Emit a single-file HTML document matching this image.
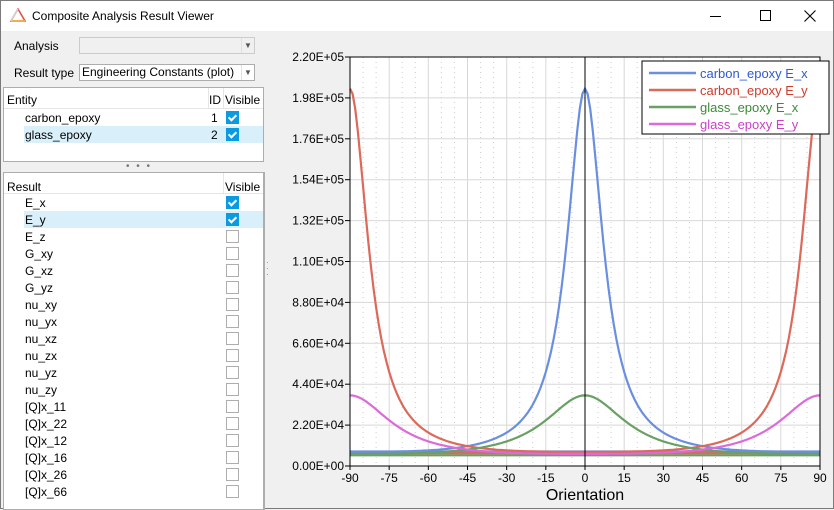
<!DOCTYPE html>
<html><head><meta charset="utf-8"><style>
*{margin:0;padding:0;box-sizing:border-box}
body{width:834px;height:509px;overflow:hidden;background:#f0f0f0;font-family:"Liberation Sans",sans-serif;font-size:12px;color:#000;position:relative}
.win{position:absolute;left:0;top:0;width:834px;height:509px;border:1px solid #7a7a7a;background:#f0f0f0}
.title{position:absolute;left:0;top:0;width:832px;height:30px;background:#fff}
.title .t{position:absolute;left:31px;top:8px;font-size:12px}
.abs{position:absolute}
.combo{position:absolute;left:78px;width:176px;height:17px;border:1px solid #adadad;background:#fff;font-size:12px;padding-left:2px;line-height:15px}
.combo .arr{position:absolute;right:0;top:0;width:13px;height:15px;border-left:1px solid #e0e0e0;font-size:8px;text-align:center;line-height:15px;color:#555}
.tbl{position:absolute;left:2px;width:261px;background:#fff;border:1px solid #adadad}
.hdr{position:absolute;left:0;top:0;height:21px;width:259px;border-bottom:1px solid #e5e5e5;background:#fff}
.row{position:absolute;left:0;height:17px;width:259px}
.cb{position:absolute;width:13px;height:13px;border:1px solid #adadad;background:#fff}
.cb.on{background:#0b9be0;border-color:#0b9be0}
.cb.on:after{content:"";position:absolute;left:3px;top:1px;width:3px;height:6px;border:solid #fff;border-width:0 2px 2px 0;transform:rotate(45deg)}
.sel{background:#d9f0fa}
svg text{font-family:"Liberation Sans",sans-serif}
</style></head><body>
<div class="win">
<div class="title">
<svg class="abs" style="left:9px;top:7px" width="16" height="15" viewBox="0 0 16 15"><path d="M8 1 L15 13 L1 13 Z" fill="none" stroke="#e35050" stroke-width="1.6"/><path d="M1 13 L15 13" stroke="#f0b040" stroke-width="1.6"/><path d="M8 1 L1 13" stroke="#d0d0d0" stroke-width="1.6"/></svg>
<div class="t">Composite Analysis Result Viewer</div>
<div class="abs" style="left:709px;top:15px;width:11px;height:1px;background:#000"></div>
<div class="abs" style="left:759px;top:9px;width:11px;height:11px;border:1px solid #000"></div>
<svg class="abs" style="left:803px;top:9px" width="12" height="12"><path d="M0.5 0.5L11.5 11.5M11.5 0.5L0.5 11.5" stroke="#000" stroke-width="1.1"/></svg>
</div>
<div class="abs" style="left:13px;top:38px">Analysis</div>
<div class="combo" style="top:36px;background:#f0f0f0;border-color:#ccc"><div class="arr">▼</div></div>
<div class="abs" style="left:13px;top:65px">Result type</div>
<div class="combo" style="top:63px">Engineering Constants (plot)<div class="arr">▼</div></div>

<div class="tbl" style="top:86px;height:75px">
<div class="hdr"><span class="abs" style="left:3px;top:5px">Entity</span><span class="abs" style="left:205px;top:5px">ID</span><span class="abs" style="left:221px;top:5px">Visible</span>
<div class="abs" style="left:204px;top:0;width:1px;height:21px;background:#e5e5e5"></div><div class="abs" style="left:219px;top:0;width:1px;height:21px;background:#e5e5e5"></div></div>
<div class="row" style="top:21px"><span class="abs" style="left:21px;top:2px">carbon_epoxy</span><span class="abs" style="left:207px;top:2px">1</span><div class="cb on" style="left:222px;top:2px"></div></div>
<div class="row" style="top:38px"><div class="abs sel" style="left:20px;top:0;width:239px;height:17px"></div><span class="abs" style="left:21px;top:2px">glass_epoxy</span><span class="abs" style="left:207px;top:2px">2</span><div class="cb on" style="left:222px;top:2px"></div></div>
</div>
<div class="abs" style="left:125px;top:160px;font-size:10px;color:#777;letter-spacing:2px">• • •</div>

<div class="tbl" style="top:171px;height:338px">
<div class="hdr"><span class="abs" style="left:3px;top:7px">Result</span><span class="abs" style="left:221px;top:7px">Visible</span>
<div class="abs" style="left:219px;top:0;width:1px;height:21px;background:#e5e5e5"></div></div>
<div id="rl"></div>
</div>
<div class="abs" style="left:263px;top:171px;width:1px;height:338px;background:#adadad"></div>
<div class="abs" style="left:265px;top:259px;font-size:8px;color:#777;line-height:6px">·<br>·<br>·</div>

<svg class="abs" style="left:270px;top:31px" width="563" height="477" id="ch"></svg>
</div>
<script>
var names=["E_x","E_y","E_z","G_xy","G_xz","G_yz","nu_xy","nu_yx","nu_xz","nu_zx","nu_yz","nu_zy","[Q]x_11","[Q]x_22","[Q]x_12","[Q]x_16","[Q]x_26","[Q]x_66"];
var h="";names.forEach(function(n,i){var t=21+i*17;h+='<div class="row" style="top:'+t+'px">'+(i==1?'<div class="abs sel" style="left:20px;top:0;width:239px;height:17px"></div>':'')+'<span class="abs" style="left:21px;top:2px">'+n+'</span><div class="cb'+(i<2?' on':'')+'" style="left:222px;top:2px"></div></div>';});
document.getElementById("rl").innerHTML=h;
var ox=270,oy=31,L=349-ox,R=819-ox,T=56-oy,B=465-oy;
function X(d){return L+(d+90)/180*(R-L)}function Y(v){return B-v/2.2e5*(B-T)}
var s='<rect x="'+L+'" y="'+T+'" width="'+(R-L)+'" height="'+(B-T)+'" fill="#fff"/>';
for(var d=-90;d<=90;d+=5){var x=X(d).toFixed(1);if(d%15==0)s+='<line x1="'+x+'" y1="'+T+'" x2="'+x+'" y2="'+B+'" stroke="#d8d8d8"/>';else s+='<line x1="'+x+'" y1="'+T+'" x2="'+x+'" y2="'+B+'" stroke="#ccc" stroke-dasharray="1,4"/>';}
var labs=["0.00E+00","2.20E+04","4.40E+04","6.60E+04","8.80E+04","1.10E+05","1.32E+05","1.54E+05","1.76E+05","1.98E+05","2.20E+05"];
for(var i=0;i<=10;i++){var y=(B-i*(B-T)/10).toFixed(1);s+='<line x1="'+L+'" y1="'+y+'" x2="'+R+'" y2="'+y+'" stroke="#d8d8d8"/><line x1="'+(L-5)+'" y1="'+y+'" x2="'+L+'" y2="'+y+'" stroke="#000"/><text x="'+(L-6)+'" y="'+(+y+4)+'" text-anchor="end" font-size="12">'+labs[i]+'</text>';}
for(var d=-90;d<=90;d+=15){var x=X(d);s+='<line x1="'+x+'" y1="'+B+'" x2="'+x+'" y2="'+(B+4)+'" stroke="#000"/><text x="'+x+'" y="'+(B+16)+'" text-anchor="middle" font-size="12">'+d+'</text>';}
function E(E1,E2,G,nu,th){var r=th*Math.PI/180,c=Math.cos(r),sn=Math.sin(r);return 1/(Math.pow(c,4)/E1+Math.pow(sn,4)/E2+c*c*sn*sn*(1/G-2*nu/E1));}
function curve(f,col){var p=[];for(var d=-90;d<=90;d+=1)p.push(X(d).toFixed(1)+","+Y(f(d)).toFixed(1));return '<polyline points="'+p.join(" ")+'" fill="none" stroke="'+col+'" stroke-width="2.2"/>';}
s+='<line x1="'+L+'" y1="'+Y(7800)+'" x2="'+R+'" y2="'+Y(7800)+'" stroke="#6a8fe0" stroke-width="2.2"/>';
s+='<line x1="'+L+'" y1="'+Y(5800)+'" x2="'+R+'" y2="'+Y(5800)+'" stroke="#6aa066" stroke-width="2.2"/>';
s+='<line x1="'+L+'" y1="'+Y(6900)+'" x2="'+R+'" y2="'+Y(6900)+'" stroke="#dc6a5a" stroke-width="2.2"/>';
s+=curve(function(d){return E(2.03e5,7600,4150,0.3,d)},"#6a8fe0");
s+=curve(function(d){return E(2.03e5,7600,4150,0.3,d+90)},"#dc6a5a");
s+=curve(function(d){return E(3.8e4,6500,3500,0.25,d)},"#6aa066");
s+=curve(function(d){return E(3.8e4,6500,3500,0.25,d+90)},"#dc6ad8");
var cx=X(0);s+='<line x1="'+cx+'" y1="'+T+'" x2="'+cx+'" y2="'+B+'" stroke="#000"/>';
s+='<rect x="'+L+'" y="'+T+'" width="'+(R-L)+'" height="'+(B-T)+'" fill="none" stroke="#000"/>';
s+='<text x="'+cx+'" y="'+(B+34)+'" text-anchor="middle" font-size="16">Orientation</text>';
var lx=641-ox,ly=60-oy;s+='<rect x="'+lx+'" y="'+ly+'" width="187" height="73" fill="#fff" stroke="#000"/>';
var lg=[["carbon_epoxy E_x","#6a8fe0","#2e5bd0"],["carbon_epoxy E_y","#dc6a5a","#d03a2a"],["glass_epoxy E_x","#6aa066","#3a8a36"],["glass_epoxy E_y","#dc6ad8","#c840c8"]];
lg.forEach(function(g,i){var y=ly+12+i*17;s+='<line x1="'+(lx+7)+'" y1="'+y+'" x2="'+(lx+54)+'" y2="'+y+'" stroke="'+g[1]+'" stroke-width="2.5"/><text x="'+(lx+58)+'" y="'+(y+5)+'" font-size="13" fill="'+g[2]+'">'+g[0]+'</text>';});
document.getElementById("ch").innerHTML=s;
</script>
</body></html>
